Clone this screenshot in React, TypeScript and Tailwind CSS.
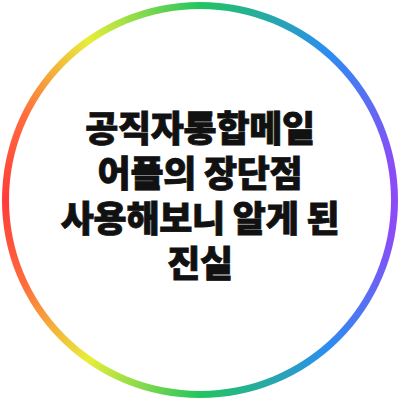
export default function App() {
  const lines = ['공직자통합메일', '어플의 장단점', '사용해보니 알게 된', '진실'];

  return (
    <div className="w-[400px] h-[400px] bg-white flex items-center justify-center">
      <div className="w-[396px] h-[396px] rounded-full p-[7px] bg-[conic-gradient(#22c55e_0deg,#2b8ef0_40deg,#8b4cf7_80deg,#8b4cf7_100deg,#2b8ef0_140deg,#22c55e_180deg,#e8ee3a_215deg,#ff6a3d_245deg,#ff3b3b_270deg,#ff6a3d_295deg,#e8ee3a_325deg,#22c55e_360deg)]">
        <div className="w-full h-full rounded-full bg-white flex flex-col items-center justify-center pb-[12px]">
          {lines.map(l => (
            <div
              key={l}
              className="text-[36px] leading-[45px] font-black text-[#111] whitespace-nowrap tracking-[-0.3px] [-webkit-text-stroke:0.8px_#111] [font-family:'Noto_Sans_CJK_KR',sans-serif]"
            >
              {l}
            </div>
          ))}
        </div>
      </div>
    </div>
  );
}
